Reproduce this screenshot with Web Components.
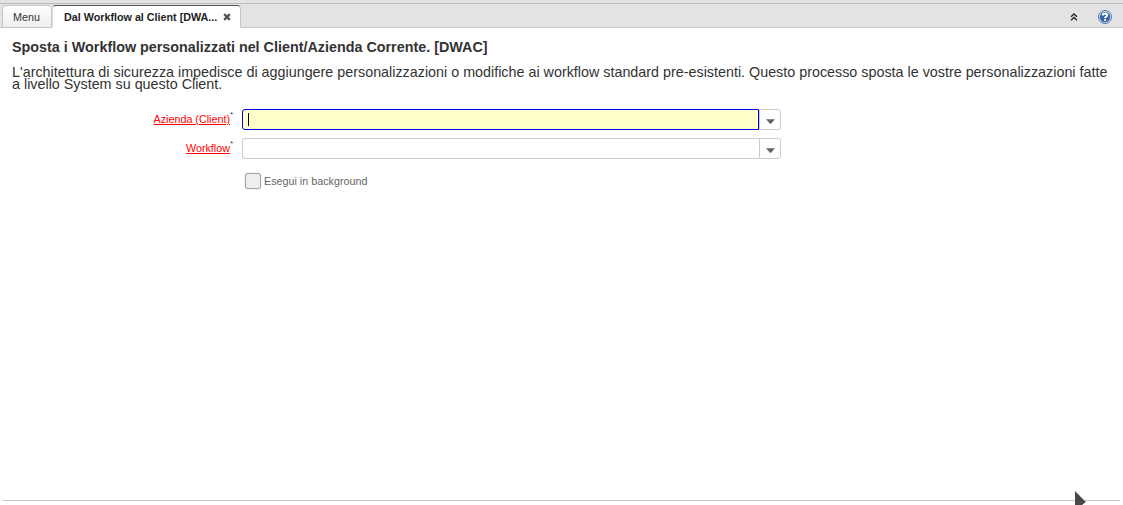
<!DOCTYPE html>
<html lang="it">
<head>
<meta charset="utf-8">
<title>Dal Workflow al Client</title>
<style>
html,body{margin:0;height:505px;overflow:hidden;background:#fff;font-family:"Liberation Sans",Arial,sans-serif;color:#333}
</style>
</head>
<body>
<process-window></process-window>
<script>
function define(name, html){
  const t=document.createElement('template');
  t.innerHTML=html;
  customElements.define(name,class extends HTMLElement{
    constructor(){super();this.attachShadow({mode:'open'}).append(t.content.cloneNode(true));}
  });
}
define('tab-item',`<style>
:host{display:flex;box-sizing:border-box;height:23px;width:50px;border:1px solid #c5c5c5;border-radius:4px 4px 0 0;background:linear-gradient(#fefefe,#eee);font-size:10.76px;line-height:13px;padding:5px 0 0 10px;white-space:nowrap;color:#333}
:host([selected]){width:189px;background:#fff;border-top-color:#555;border-bottom-color:#fff;border-left-color:#ddd;padding-left:11px;font-weight:bold;color:#222}
</style><slot></slot>`);
define('tab-close',`<style>:host{display:block;margin:2px 0 0 6px;height:8px}svg{display:block}</style>
<svg width="8" height="8" viewBox="0 0 8 8"><path d="M1.2 1.2L6.8 6.8M6.8 1.2L1.2 6.8" stroke="#555" stroke-width="2.4"/></svg>`);
define('tab-strip',`<style>
:host{display:flex;box-sizing:border-box;height:28px;padding:5px 0 0 2px;background:linear-gradient(#e3e3e3 0 3px,#bcbcbc 3px 4px,#e3e3e3 4px 27px,#c9c9c9 27px)}
.tools{margin-left:auto;display:flex;height:23px;padding-right:11px}
.up{margin:8px 19px 0 0}.help{margin-top:4px}svg{display:block}
</style><slot></slot><div class="tools">
<svg class="up" width="8" height="8" viewBox="0 0 8 8"><path d="M1 3.7L4 .9L7 3.7M1 7.2L4 4.4L7 7.2" fill="none" stroke="#222" stroke-width="1.3"/></svg>
<svg class="help" width="15" height="16" viewBox="0 0 15 16"><circle cx="8" cy="8" r="6.5" fill="#dce6f2" stroke="#4c74ac" stroke-width="1"/><circle cx="8" cy="8" r="5.2" fill="#3564a5"/><path d="M5.7 6.5Q5.9 4.5 8.1 4.5Q10.3 4.6 10.1 6.3Q10 7.3 8.8 7.9Q8.1 8.3 8.1 9.3M8.1 10.3V12.1" fill="none" stroke="#fff" stroke-width="1.9"/></svg></div>`);
define('process-intro',`<style>
:host{display:block;padding:11px 12px 0;color:#333}
h1{margin:0;font-size:14.35px;line-height:16px;font-weight:bold}
p{margin:11px 0 0;font-size:14.345px;line-height:12px}
</style><h1><slot name="title"></slot></h1><p><slot></slot></p>`);
define('combo-box',`<style>
:host{display:flex;width:539px;height:21px}
.in{box-sizing:border-box;width:517px;border:1px solid #ccc;border-right:0;border-radius:3px 0 0 3px;padding:3px 0 0 5px}
.btn{box-sizing:border-box;width:22px;border:1px solid #ccc;border-radius:0 3px 3px 0;padding:9px 0 0 6px}
:host([focused]) .in{border:1px solid #00e;background:#ffc}
.caret{width:1px;height:13px;background:#000;display:none}
:host([focused]) .caret{display:block}
svg{display:block}
</style><div class="in"><div class="caret"></div></div><div class="btn"><svg width="9" height="5" viewBox="0 0 9 5"><path d="M0 .3H9L5 4.7H4Z" fill="#636363"/></svg></div>`);
define('form-row',`<style>
:host{display:flex;height:21px;margin-bottom:8px}
.l{display:flex;justify-content:flex-end;width:234px;margin-right:8px;font-size:10.76px;line-height:13px;color:red;white-space:nowrap}
.t{text-decoration:underline;margin-top:4px}
sup{font-size:8px;line-height:8px;color:#333;margin-top:2px;width:4px}
</style><div class="l"><span class="t"><slot name="label"></slot></span><sup>*</sup></div><slot></slot>`);
define('check-option',`<style>
:host{display:flex;padding:6px 0 0 245px;font-size:10.76px;line-height:13px;color:#666}
.b{box-sizing:border-box;width:16px;height:16px;border:1px solid #a0a3a6;border-radius:3px;background:#edeef0;margin-right:3px;box-shadow:0 0 1px #aaa}
.t{padding-top:2px}
</style><div class="b"></div><span class="t"><slot></slot></span>`);
define('pane-footer',`<style>
:host{display:block;margin:auto 3px 0;height:5px;border-top:1px solid #c8c8c8;position:relative;flex:none;box-sizing:border-box}
svg{position:absolute;left:1071px;top:-11px}
</style><svg width="14" height="15" viewBox="0 0 14 15"><path d="M1 1L11.8 12L8 15H1Z" fill="#484848"/></svg>`);
define('process-window',`<style>
:host{display:flex;flex-direction:column;height:505px}
.form{padding-top:19px}
</style>
<tab-strip><tab-item>Menu</tab-item><tab-item selected>Dal Workflow al Client [DWA...<tab-close></tab-close></tab-item></tab-strip>
<process-intro><span slot="title">Sposta i Workflow personalizzati nel Client/Azienda Corrente. [DWAC]</span>L'architettura di sicurezza impedisce di aggiungere personalizzazioni o modifiche ai workflow standard pre-esistenti. Questo processo sposta le vostre personalizzazioni fatte a livello System su questo Client.</process-intro>
<div class="form">
<form-row><span slot="label">Azienda (Client)</span><combo-box focused></combo-box></form-row>
<form-row><span slot="label">Workflow</span><combo-box></combo-box></form-row>
<check-option>Esegui in background</check-option>
</div>
<pane-footer></pane-footer>`);
</script>
</body>
</html>
